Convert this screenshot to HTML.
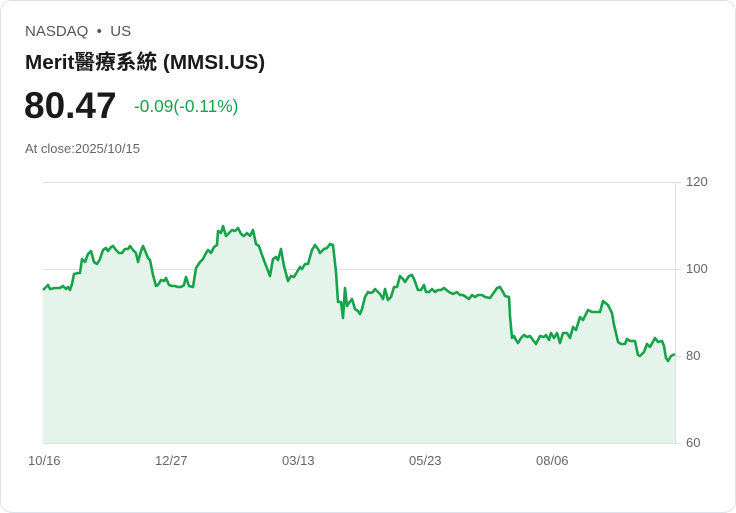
<!DOCTYPE html>
<html><head><meta charset="utf-8"><style>
html,body{margin:0;padding:0;background:#fff;}
body{width:736px;height:513px;overflow:hidden;font-family:"Liberation Sans","Noto Sans CJK TC",sans-serif;}
.card{position:absolute;left:0;top:0;width:734px;height:511px;border:1px solid #dde3ec;border-radius:12px;background:#fff;}
.t{position:absolute;white-space:nowrap;}
</style></head><body>
<div class="card"></div>
<div class="t" style="left:25px;top:23px;font-size:15px;color:#555;">NASDAQ &nbsp;•&nbsp; US</div>
<div class="t" style="left:25px;top:45px;font-size:20.7px;font-weight:bold;color:#1a1a1a;">Merit醫療系統 (MMSI.US)</div>
<div class="t" style="left:24px;top:85px;font-size:37px;font-weight:bold;color:#1a1a1a;">80.47</div>
<div class="t" style="left:134px;top:96px;font-size:17.3px;color:#16a34a;">-0.09(-0.11%)</div>
<div class="t" style="left:25px;top:141px;font-size:13px;color:#666;">At close:2025/10/15</div>
<svg width="736" height="513" style="position:absolute;left:0;top:0">
<g stroke="#e0e0e0" stroke-width="1">
<line x1="43" y1="182.5" x2="681" y2="182.5"/>
<line x1="43" y1="269.5" x2="681" y2="269.5"/>
<line x1="43" y1="356.5" x2="681" y2="356.5"/>
<line x1="43" y1="443.5" x2="681" y2="443.5"/>
<line x1="675.5" y1="182" x2="675.5" y2="443"/>
</g>
<g font-size="13" fill="#666" font-family="Liberation Sans, sans-serif">
<text x="686" y="186">120</text><text x="686" y="273">100</text><text x="686" y="360">80</text><text x="686" y="447">60</text>
<text x="28" y="465">10/16</text><text x="155" y="465">12/27</text><text x="282" y="465">03/13</text><text x="409" y="465">05/23</text><text x="536" y="465">08/06</text>
</g>
<path fill="#e5f4ea" d="M43,290 L48,285 50,289 55,288 60,288 63,286 66,289 68,287 70,290 72,284 74,274 78,273 80,273 82,259 85,262 88,254 91,251 94,262 97,264 100,259 103,250 106,248 108,251 111,247 113,246 116,250 119,253 122,253 125,249 128,249 130,246 133,250 136,253 138,262 141,251 143,246 146,253 148,258 150,260 153,275 156,286 158,285 161,280 164,281 166,278 169,285 172,286 175,286 178,287 181,287 184,285 186,277 189,286 193,287 196,268 200,262 203,259 206,253 208,250 211,253 214,247 217,245 218,231 221,233 223,226 226,236 229,233 232,230 235,231 238,228 241,234 244,236 247,233 250,236 253,230 256,244 259,246 262,255 265,263 270,276 273,259 276,257 278,260 281,249 284,266 288,281 291,276 294,277 297,272 300,267 302,269 305,264 308,264 312,250 315,245 318,249 320,253 324,249 327,248 330,244 333,245 336,272 338,302 341,302 343,318 345,288 347,306 349,303 352,299 355,309 358,311 360,314 362,309 365,297 368,292 370,293 373,292 375,289 378,292 380,294 383,299 385,289 388,300 391,297 394,287 397,287 400,276 403,279 405,282 409,276 412,275 414,279 418,290 421,290 424,285 426,292 429,292 432,289 435,292 438,290 441,290 444,288 449,292 453,294 457,292 460,295 463,295 466,297 469,299 472,295 475,297 478,295 482,295 485,297 490,298 495,291 497,288 500,287 503,292 505,296 509,297 510,316 512,338 514,336 516,340 518,343 521,338 524,335 527,337 530,336 533,340 536,344 540,336 544,337 546,335 549,340 551,333 554,338 557,333 560,343 563,333 567,333 570,338 573,327 576,330 580,317 583,320 588,310 592,312 595,312 600,312 603,301 608,305 612,313 614,325 616,333 618,342 621,344 625,344 627,339 630,341 635,341 638,355 640,356 644,352 647,344 650,347 655,338 658,342 662,341 664,346 666,358 668,361 671,356 675,354 L675,443 L43,443 Z"/>
<path fill="none" stroke="#16a34a" stroke-width="2.6" stroke-linejoin="round" d="M43,290 L48,285 50,289 55,288 60,288 63,286 66,289 68,287 70,290 72,284 74,274 78,273 80,273 82,259 85,262 88,254 91,251 94,262 97,264 100,259 103,250 106,248 108,251 111,247 113,246 116,250 119,253 122,253 125,249 128,249 130,246 133,250 136,253 138,262 141,251 143,246 146,253 148,258 150,260 153,275 156,286 158,285 161,280 164,281 166,278 169,285 172,286 175,286 178,287 181,287 184,285 186,277 189,286 193,287 196,268 200,262 203,259 206,253 208,250 211,253 214,247 217,245 218,231 221,233 223,226 226,236 229,233 232,230 235,231 238,228 241,234 244,236 247,233 250,236 253,230 256,244 259,246 262,255 265,263 270,276 273,259 276,257 278,260 281,249 284,266 288,281 291,276 294,277 297,272 300,267 302,269 305,264 308,264 312,250 315,245 318,249 320,253 324,249 327,248 330,244 333,245 336,272 338,302 341,302 343,318 345,288 347,306 349,303 352,299 355,309 358,311 360,314 362,309 365,297 368,292 370,293 373,292 375,289 378,292 380,294 383,299 385,289 388,300 391,297 394,287 397,287 400,276 403,279 405,282 409,276 412,275 414,279 418,290 421,290 424,285 426,292 429,292 432,289 435,292 438,290 441,290 444,288 449,292 453,294 457,292 460,295 463,295 466,297 469,299 472,295 475,297 478,295 482,295 485,297 490,298 495,291 497,288 500,287 503,292 505,296 509,297 510,316 512,338 514,336 516,340 518,343 521,338 524,335 527,337 530,336 533,340 536,344 540,336 544,337 546,335 549,340 551,333 554,338 557,333 560,343 563,333 567,333 570,338 573,327 576,330 580,317 583,320 588,310 592,312 595,312 600,312 603,301 608,305 612,313 614,325 616,333 618,342 621,344 625,344 627,339 630,341 635,341 638,355 640,356 644,352 647,344 650,347 655,338 658,342 662,341 664,346 666,358 668,361 671,356 675,354"/>
</svg>
</body></html>
